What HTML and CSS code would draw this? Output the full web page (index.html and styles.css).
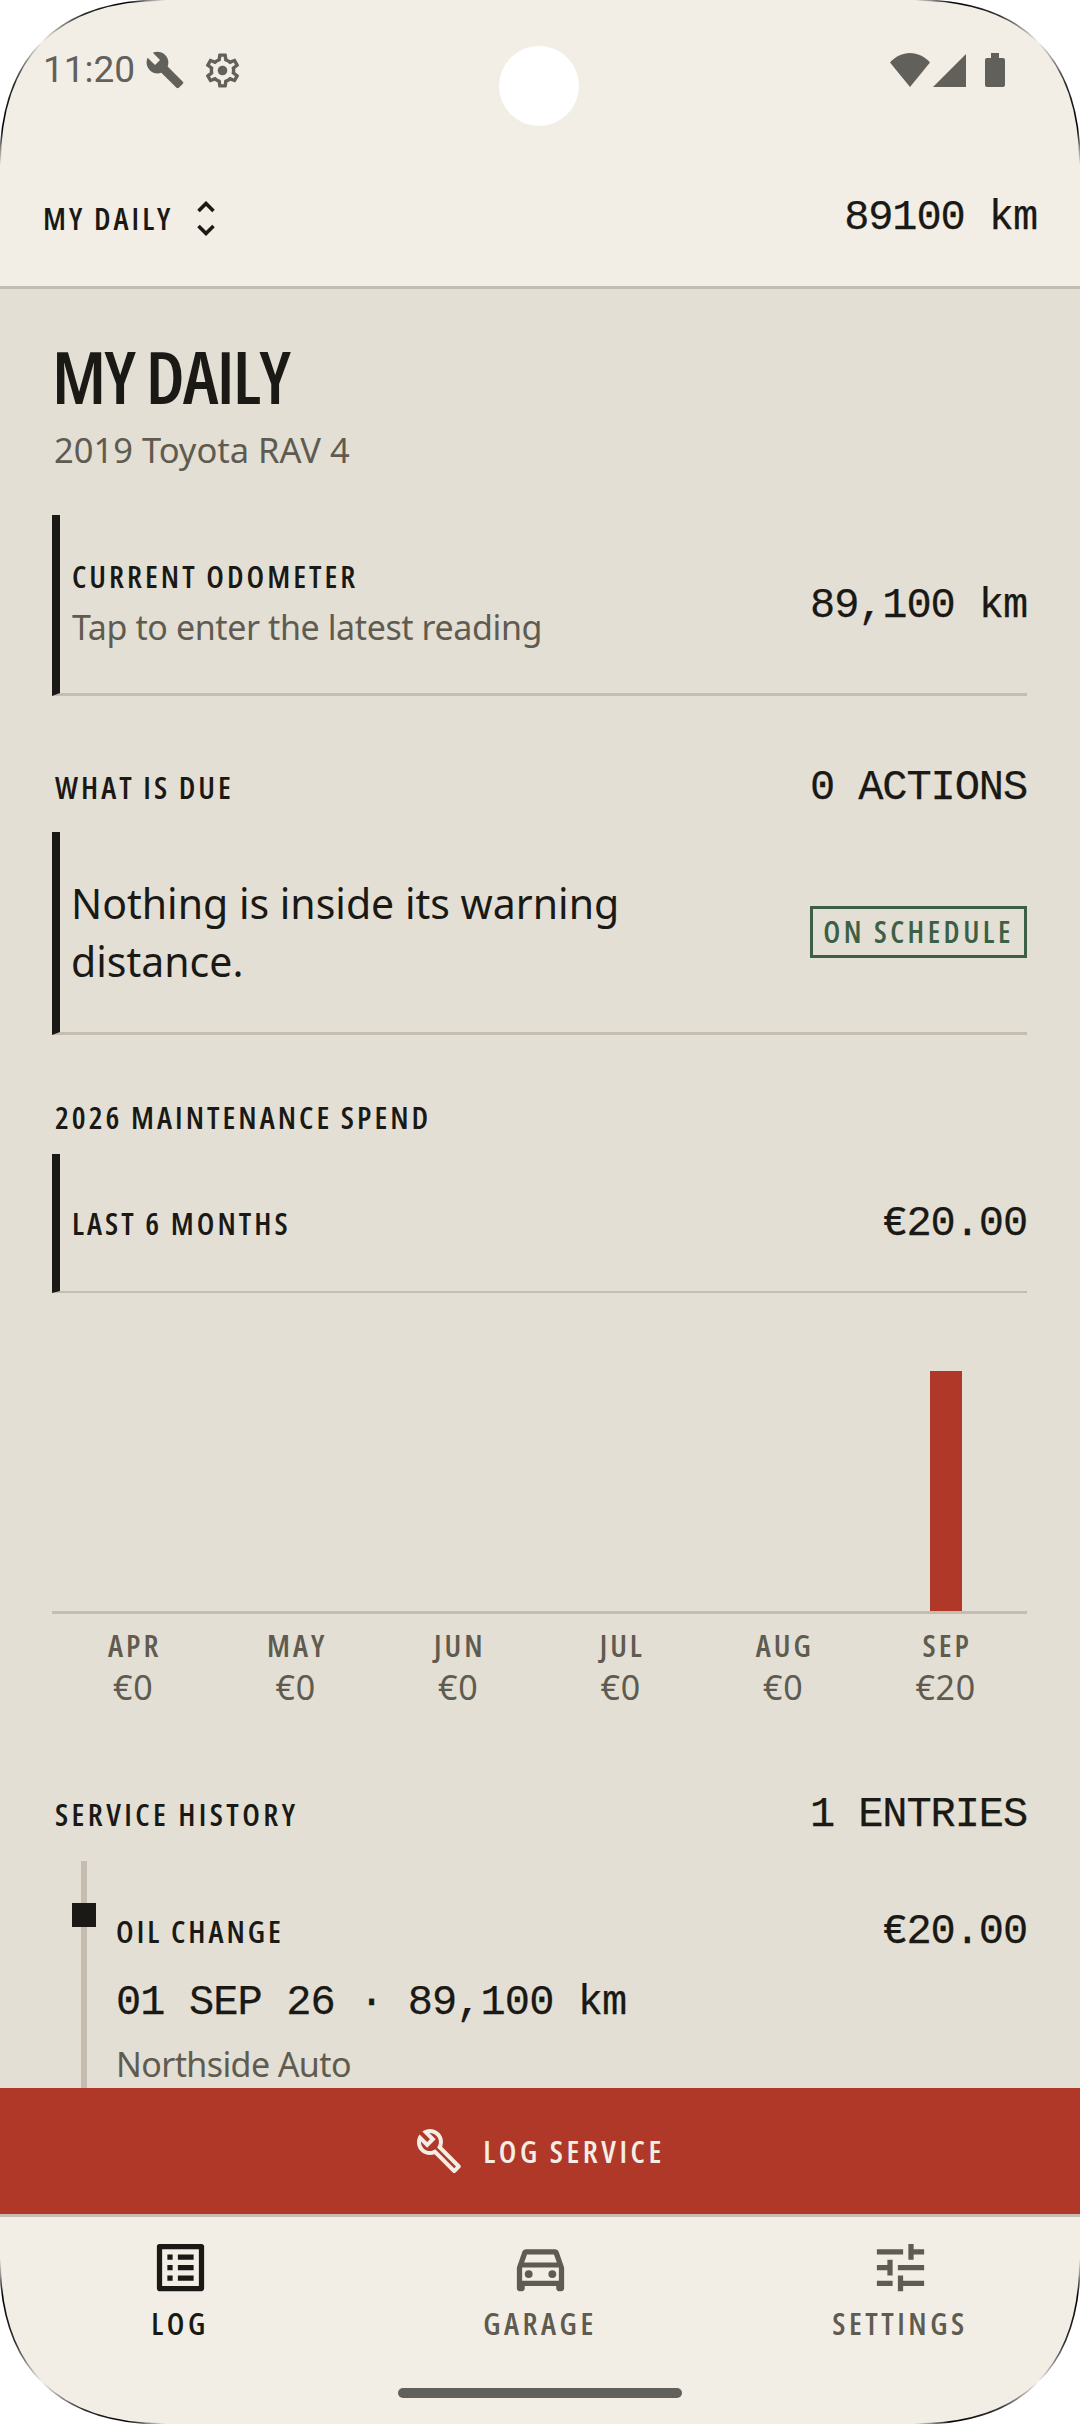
FILE: index.html
```html
<!DOCTYPE html>
<html lang="en">
<head>
<meta charset="utf-8">
<title>My Daily</title>
<link rel="stylesheet" href="styles.css">
</head>
<body>
<div class="screen">
  <header class="appbar">
    <div class="statusbar">
      <div class="status-left">
        <span class="time">11:20</span>
        <svg class="ic-wrench" viewBox="0 0 24 24"><path d="M22.7 19l-9.1-9.1c.9-2.3.4-5-1.5-6.9-2-2-5-2.4-7.4-1.3L9 6 6 9 1.6 4.7C.4 7.1.9 10.1 2.9 12.1c1.9 1.9 4.6 2.4 6.9 1.5l9.1 9.1c.4.4 1 .4 1.4 0l2.3-2.3c.5-.4.5-1.1.1-1.4z"/></svg>
        <svg class="ic-gear" viewBox="0 0 24 24"><path d="M19.43 12.98c.04-.32.07-.64.07-.98 0-.34-.03-.66-.07-.98l2.11-1.65c.19-.15.24-.42.12-.64l-2-3.46c-.09-.16-.26-.25-.44-.25-.06 0-.12.01-.17.03l-2.49 1c-.52-.4-1.08-.73-1.69-.98l-.38-2.65C14.46 2.18 14.25 2 14 2h-4c-.25 0-.46.18-.49.42l-.38 2.65c-.61.25-1.17.59-1.69.98l-2.49-1c-.06-.02-.12-.03-.18-.03-.17 0-.34.09-.43.25l-2 3.46c-.13.22-.07.49.12.64l2.11 1.65c-.04.32-.07.65-.07.98 0 .33.03.66.07.98l-2.11 1.65c-.19.15-.24.42-.12.64l2 3.46c.09.16.26.25.44.25.06 0 .12-.01.17-.03l2.49-1c.52.4 1.08.73 1.69.98l.38 2.65c.03.24.24.42.49.42h4c.25 0 .46-.18.49-.42l.38-2.65c.61-.25 1.17-.59 1.69-.98l2.49 1c.06.02.12.03.18.03.17 0 .34-.09.43-.25l2-3.46c.12-.22.07-.49-.12-.64l-2.11-1.65zm-1.98-1.71c.04.31.05.52.05.73 0 .21-.02.43-.05.73l-.14 1.13.89.7 1.08.84-.7 1.21-1.27-.51-1.04-.42-.9.68c-.43.32-.84.56-1.25.73l-1.06.43-.16 1.13-.2 1.35h-1.4l-.19-1.35-.16-1.13-1.06-.43c-.43-.18-.83-.41-1.23-.71l-.91-.7-1.06.43-1.27.51-.7-1.21 1.08-.84.89-.7-.14-1.13c-.03-.31-.05-.54-.05-.74s.02-.43.05-.73l.14-1.13-.89-.7-1.08-.84.7-1.21 1.27.51 1.04.42.9-.68c.43-.32.84-.56 1.25-.73l1.06-.43.16-1.13.2-1.35h1.39l.19 1.35.16 1.13 1.06.43c.43.18.83.41 1.23.71l.91.7 1.06-.43 1.27-.51.7 1.21-1.07.85-.89.7.14 1.13z"/><circle cx="12" cy="12" r="2.8"/></svg>
      </div>
      <div class="status-right">
        <svg class="ic-wifi" viewBox="0 0 40 34"><path d="M0 9.5C5.5 3.5 12.5 0 20 0s14.5 3.5 20 9.5L20 34z"/></svg>
        <svg class="ic-signal" viewBox="0 0 33 33"><path d="M33 0v33H0z"/></svg>
        <svg class="ic-battery" viewBox="0 0 20 34"><path d="M6 0h8v5h4a2 2 0 0 1 2 2v25a2 2 0 0 1-2 2H2a2 2 0 0 1-2-2V7a2 2 0 0 1 2-2h4z"/></svg>
      </div>
    </div>
    <div class="topbar">
      <div class="picker">
        <span class="label">MY DAILY</span>
        <svg class="ic-updown" viewBox="0 0 18 35"><path d="M1.5 10 9 2.5 16.500 10M1.500 25 9 32.500 16.500 25"/></svg>
      </div>
      <span class="mono">89100 km</span>
    </div>
  </header>

  <main class="content">
    <h1 class="title">MY DAILY</h1>
    <p class="subtitle">2019 Toyota RAV 4</p>

    <section class="row row-odo">
      <div class="row-text">
        <div class="label">CURRENT ODOMETER</div>
        <div class="row-sub">Tap to enter the latest reading</div>
      </div>
      <span class="mono">89,100 km</span>
    </section>

    <div class="section-head head-due">
      <span class="label">WHAT IS DUE</span>
      <span class="mono">0 ACTIONS</span>
    </div>
    <section class="row row-due">
      <p class="due-text">Nothing is inside its warning distance.</p>
      <span class="badge">ON SCHEDULE</span>
    </section>

    <div class="section-head head-spend">
      <span class="label">2026 MAINTENANCE SPEND</span>
    </div>
    <section class="row row-spend">
      <span class="label">LAST 6 MONTHS</span>
      <span class="mono">€20.00</span>
    </section>

    <div class="chart">
      <div class="plot">
        <div class="slot"></div><div class="slot"></div><div class="slot"></div>
        <div class="slot"></div><div class="slot"></div>
        <div class="slot"><div class="bar" style="height:240px"></div></div>
      </div>
      <div class="months">
        <div class="month"><span class="label">APR</span><span class="amount">€0</span></div>
        <div class="month"><span class="label">MAY</span><span class="amount">€0</span></div>
        <div class="month"><span class="label">JUN</span><span class="amount">€0</span></div>
        <div class="month"><span class="label">JUL</span><span class="amount">€0</span></div>
        <div class="month"><span class="label">AUG</span><span class="amount">€0</span></div>
        <div class="month"><span class="label">SEP</span><span class="amount">€20</span></div>
      </div>
    </div>

    <div class="section-head head-history">
      <span class="label">SERVICE HISTORY</span>
      <span class="mono">1 ENTRIES</span>
    </div>
    <div class="timeline">
      <article class="entry">
        <span class="dot"></span>
        <div class="entry-top">
          <span class="label">OIL CHANGE</span>
          <span class="mono">€20.00</span>
        </div>
        <div class="mono entry-date">01 SEP 26 · 89,100 km</div>
        <div class="entry-shop">Northside Auto</div>
      </article>
    </div>
  </main>

  <button class="cta">
    <svg class="ic-cta" viewBox="0 0 24 24"><path d="M22.61 18.99l-9.08-9.08c.93-2.34.45-5.1-1.44-7C9.79.61 6.21.4 3.66 2.26L7.5 6.11 6.08 7.52 2.25 3.69C.39 6.23.6 9.82 2.9 12.11c1.86 1.86 4.57 2.35 6.89 1.48l9.11 9.11c.39.39 1.02.39 1.41 0l2.3-2.3c.4-.38.4-1.01 0-1.41zm-3 1.6l-9.46-9.46c-.61.45-1.29.72-2 .82-1.36.2-2.79-.21-3.83-1.25C3.37 9.76 2.93 8.5 3 7.26l3.09 3.09 4.24-4.24-3.09-3.09c1.24-.07 2.49.37 3.44 1.31 1.08 1.08 1.49 2.57 1.24 3.96-.12.71-.42 1.37-.88 1.96l9.45 9.45-.88.88z"/></svg>
    <span class="label">LOG SERVICE</span>
  </button>

  <nav class="nav">
    <div class="tab tab-active">
      <svg class="ic-nav" viewBox="0 0 24 24"><path d="M19 5v14H5V5h14m1.100-2H3.900c-.5 0-.9.4-.9.9v16.200c0 .4.4.9.9.9h16.200c.4 0 .9-.5.9-.9V3.900c0-.5-.5-.9-.9-.9zM11 7h6v2h-6V7zm0 4h6v2h-6v-2zm0 4h6v2h-6zM7 7h2v2H7zm0 4h2v2H7zm0 4h2v2H7z"/></svg>
      <span class="label">LOG</span>
    </div>
    <div class="tab">
      <svg class="ic-nav" viewBox="0 0 24 24"><path d="M18.920 6.010C18.720 5.420 18.160 5 17.500 5h-11c-.66 0-1.210.42-1.420 1.010L3 12v8c0 .55.45 1 1 1h1c.55 0 1-.45 1-1v-1h12v1c0 .55.45 1 1 1h1c.55 0 1-.45 1-1v-8l-2.080-5.990zM6.850 7h10.290l1.080 3.110H5.770L6.850 7zM19 17H5v-5h14v5z"/><circle cx="7.500" cy="14.500" r="1.500"/><circle cx="16.500" cy="14.500" r="1.500"/></svg>
      <span class="label">GARAGE</span>
    </div>
    <div class="tab">
      <svg class="ic-nav" viewBox="0 0 24 24"><path d="M3 17v2h6v-2H3zM3 5v2h10V5H3zm10 16v-2h8v-2h-8v-2h-2v6h2zM7 9v2H3v2h4v2h2V9H7zm14 4v-2H11v2h10zm-6-4h2V7h4V5h-4V3h-2v6z"/></svg>
      <span class="label">SETTINGS</span>
    </div>
    <div class="home-bar"></div>
  </nav>

  <div class="punch"></div>
  <svg class="corner corner-tl" viewBox="0 0 170 170"><defs><linearGradient id="edge" gradientUnits="userSpaceOnUse" x1="0" y1="165" x2="165" y2="0"><stop offset="0" stop-color="#000" stop-opacity="0"/><stop offset=".12" stop-color="#000"/><stop offset=".3" stop-color="#000" stop-opacity=".8"/><stop offset=".5" stop-color="#000" stop-opacity="0"/><stop offset=".7" stop-color="#000" stop-opacity=".8"/><stop offset=".88" stop-color="#000"/><stop offset="1" stop-color="#000" stop-opacity="0"/></linearGradient></defs><path class="corner-fill" d="M0 0H165C57 0 0 57 0 165z"/><path class="corner-edge" d="M0 165C0 57 57 0 165 0"/></svg>
  <svg class="corner corner-tr" viewBox="0 0 170 170"><path class="corner-fill" d="M0 0H165C57 0 0 57 0 165z"/><path class="corner-edge" d="M0 165C0 57 57 0 165 0"/></svg>
  <svg class="corner corner-bl" viewBox="0 0 170 170"><path class="corner-fill" d="M0 0H165C57 0 0 57 0 165z"/><path class="corner-edge" d="M0 165C0 57 57 0 165 0"/></svg>
  <svg class="corner corner-br" viewBox="0 0 170 170"><path class="corner-fill" d="M0 0H165C57 0 0 57 0 165z"/><path class="corner-edge" d="M0 165C0 57 57 0 165 0"/></svg>
</div>
</body>
</html>
```
FILE: styles.css
```css
* { box-sizing: border-box; margin: 0; padding: 0; }
html, body { width: 1080px; height: 2424px; overflow: hidden; background: #fff; }
body {
  font-family: "Noto Sans", sans-serif;
  color: #1a1915;
}
.screen {
  position: relative;
  width: 1080px;
  height: 2424px;
  display: flex;
  flex-direction: column;
  overflow: hidden;
}

/* shared text styles */
.label {
  font-family: "Open Sans", sans-serif;
  font-stretch: 75%;
  font-weight: 600;
  font-size: 31px;
  line-height: 36px;
  letter-spacing: 3px;
}
.mono {
  font-family: "Liberation Mono", monospace;
  font-size: 42px;
  line-height: 48px;
  letter-spacing: -1.1px;
  color: #1a1915;
  -webkit-text-stroke: .25px #1a1915;
}

/* app bar */
.appbar {
  background: #f2eee6;
  border-bottom: 3px solid #c6bdb0;
  height: 289px;
  flex: none;
}
.statusbar {
  height: 140px;
  padding: 0 75px 0 43px;
  display: flex;
  justify-content: space-between;
  align-items: center;
}
.status-left, .status-right { display: flex; align-items: center; }
.status-left svg, .status-right svg { fill: #62605a; display: block; }
.time {
  font-family: Roboto, sans-serif;
  font-size: 37px;
  line-height: 44px;
  color: #62605a;
}
.ic-wrench { width: 40px; height: 40px; margin-left: 10px; }
.ic-gear { width: 41px; height: 41px; margin-left: 17px; }
.ic-wifi { width: 40px; height: 34px; }
.ic-signal { width: 33px; height: 33px; margin-left: 3px; }
.ic-battery { width: 20px; height: 34px; margin-left: 19px; }
.topbar {
  height: 146px;
  padding: 10px 43px 0 43px;
  display: flex;
  justify-content: space-between;
  align-items: center;
}
.picker { display: flex; align-items: center; gap: 24px; }
.ic-updown {
  width: 18px;
  height: 35px;
  fill: none;
  stroke: #1a1915;
  stroke-width: 3.6;
}

/* content */
.content {
  flex: 1;
  min-height: 0;
  overflow: hidden;
  background: #e3dfd4;
  padding: 0 53px 0 52px;
}
.title {
  font-family: "Open Sans", sans-serif;
  font-stretch: 75%;
  font-weight: 650;
  font-size: 73px;
  line-height: 88px;
  letter-spacing: -1.7px;
  margin: 43px 0 0 0;
}
.subtitle {
  font-size: 34.5px;
  line-height: 48px;
  color: #5f5b50;
  margin: 6px 0 0 2px;
}
.row {
  display: flex;
  align-items: center;
  justify-content: space-between;
  border-left: 8px solid #1a1915;
  border-bottom: 3px solid #c6bdb0;
  padding-left: 12px;
}
.row-odo { height: 181px; margin-top: 41px; }
.row-odo .mono { margin-top: 4px; }
.row-due { height: 203px; }
.row-spend { height: 139px; border-bottom-width: 2px; }
.row-spend .mono { margin-top: 2px; }
.row-sub {
  font-size: 34px;
  line-height: 48px;
  letter-spacing: -.4px;
  color: #5f5b50;
  margin-top: 9px;
}
.section-head {
  display: flex;
  justify-content: space-between;
  align-items: baseline;
  padding-left: 3px;
}
.head-due { margin-top: 68px; height: 68px; }
.head-spend { margin-top: 64px; height: 55px; }
.head-history { margin-top: 81px; height: 70px; }
.head-history .label { letter-spacing: 3.4px; }
.due-text {
  font-size: 41px;
  line-height: 58px;
  width: 600px;
  margin-left: -1px;
}
.badge {
  font-family: "Open Sans", sans-serif;
  font-stretch: 75%;
  font-weight: 600;
  font-size: 30px;
  line-height: 46px;
  letter-spacing: 3.500px;
  color: #3d5f46;
  border: 3px solid #3d5f46;
  width: 217px;
  text-align: center;
  white-space: nowrap;
}

/* chart */
.plot {
  height: 321px;
  border-bottom: 3px solid #c6bdb0;
  display: grid;
  grid-template-columns: repeat(6, 1fr);
  align-items: end;
}
.slot { display: flex; justify-content: center; }
.bar { width: 32px; background: #b03829; }
.months {
  display: grid;
  grid-template-columns: repeat(6, 1fr);
  margin-top: 13px;
}
.month { display: flex; flex-direction: column; align-items: center; }
.month .label { color: #5f5b50; padding-left: 3px; }
.amount {
  font-size: 34px;
  line-height: 46px;
  letter-spacing: .8px;
  margin-top: 1px;
  color: #5f5b50;
}

/* timeline */
.timeline {
  margin-left: 29px;
  border-left: 6px solid #c6bdb0;
  padding: 0 0 40px 29px;
}
.entry { position: relative; padding-top: 47px; }
.dot {
  position: absolute;
  left: -44px;
  top: 42px;
  width: 24px;
  height: 24px;
  background: #1a1915;
}
.entry-top {
  display: flex;
  justify-content: space-between;
  align-items: baseline;
}
.entry-date { margin-top: 23px; letter-spacing: -.9px; }
.entry-shop {
  font-size: 34px;
  line-height: 40px;
  letter-spacing: -.6px;
  color: #5f5b50;
  margin-top: 17px;
}

/* call to action */
.cta {
  flex: none;
  height: 126px;
  border: 0;
  background: #b03829;
  display: flex;
  align-items: center;
  justify-content: center;
  gap: 20px;
  color: #f2eee6;
}
.ic-cta { width: 48px; height: 48px; fill: #f2eee6; }
.cta .label { letter-spacing: 3.500px; }

/* bottom nav */
.nav {
  position: relative;
  flex: none;
  height: 210px;
  background: #f2eee6;
  border-top: 3px solid #c6bdb0;
  display: grid;
  grid-template-columns: repeat(3, 1fr);
  padding-top: 19px;
  align-content: start;
}
.tab {
  display: flex;
  flex-direction: column;
  align-items: center;
  color: #5f5b50;
}
.tab-active { color: #1a1915; }
.ic-nav { width: 63px; height: 63px; fill: currentColor; display: block; }
.tab .label { margin-top: 6px; letter-spacing: 3.500px; }
.home-bar {
  position: absolute;
  left: 398px;
  bottom: 26px;
  width: 284px;
  height: 10px;
  border-radius: 5px;
  background: #62605a;
}

/* overlays */
.punch {
  position: absolute;
  left: 499px;
  top: 46px;
  width: 80px;
  height: 80px;
  border-radius: 50%;
  background: #fff;
}
.corner {
  position: absolute;
  width: 170px;
  height: 170px;
}
.corner-fill { fill: #fff; }
.corner-edge { fill: none; stroke: url(#edge); stroke-width: 1.6; }
.corner-tl { left: 0; top: 0; }
.corner-tr { right: 0; top: 0; transform: scaleX(-1); }
.corner-bl { left: 0; bottom: 0; transform: scaleY(-1); }
.corner-br { right: 0; bottom: 0; transform: scale(-1, -1); }
```
